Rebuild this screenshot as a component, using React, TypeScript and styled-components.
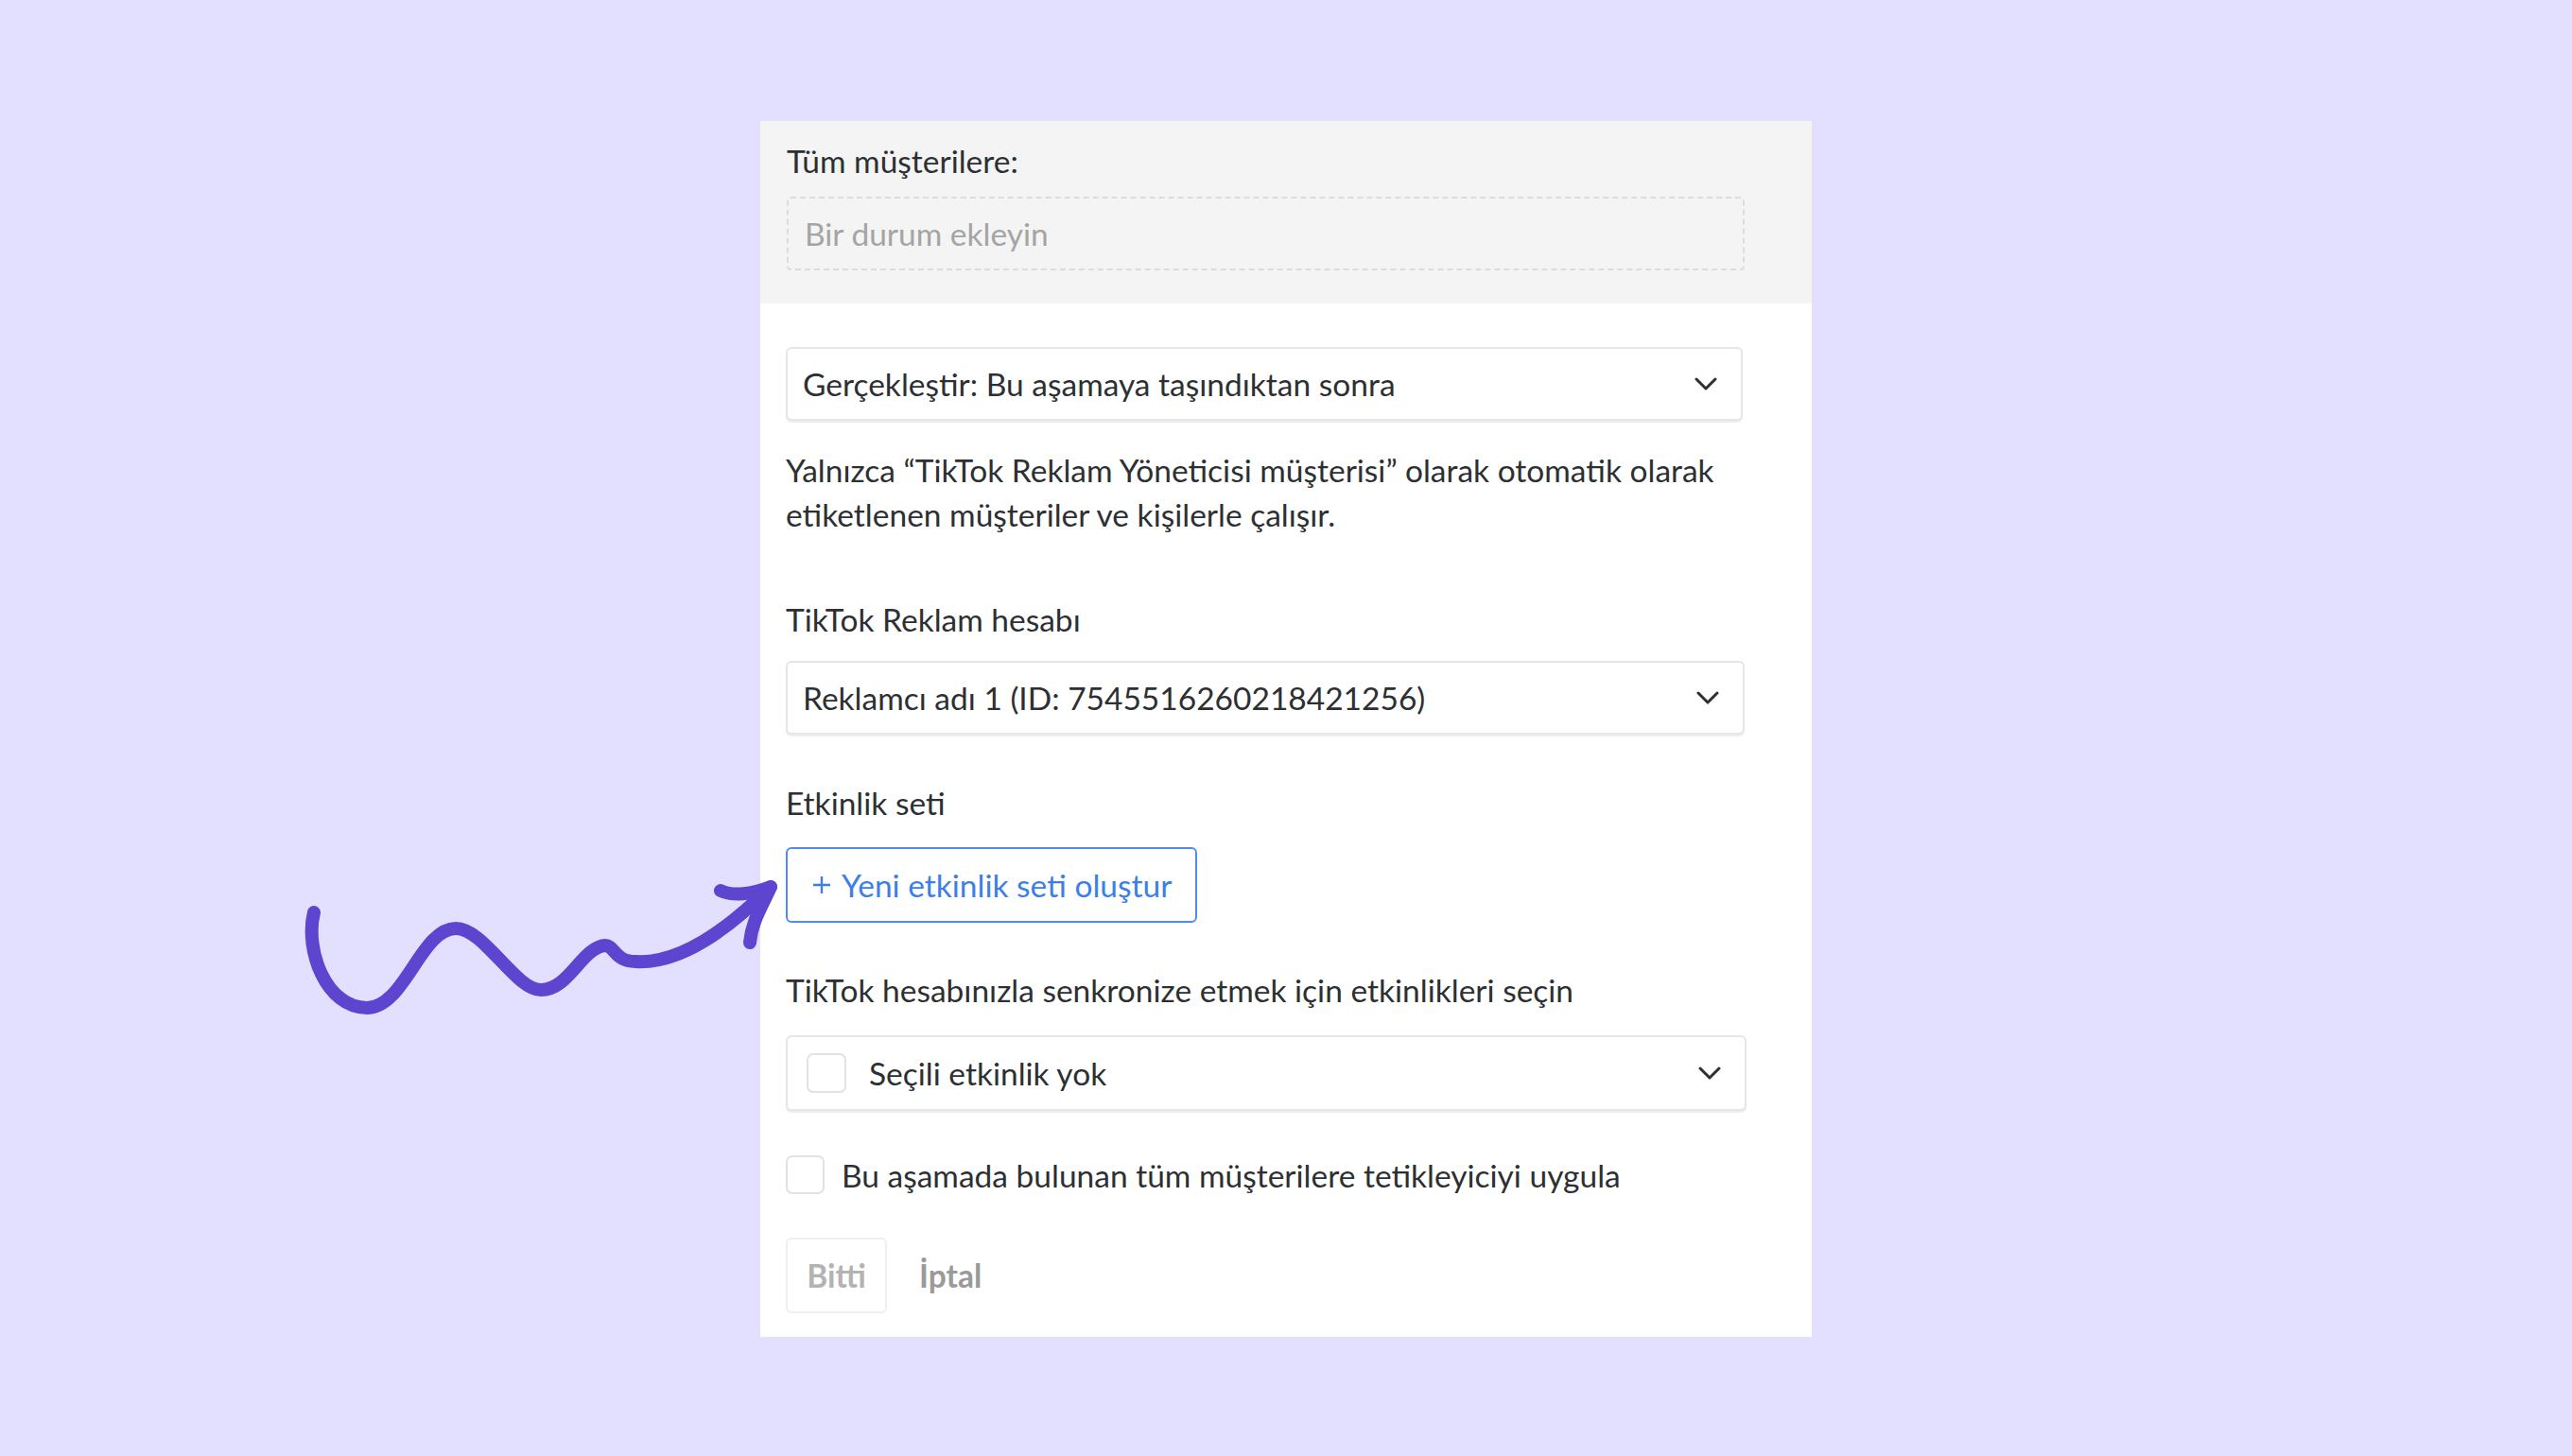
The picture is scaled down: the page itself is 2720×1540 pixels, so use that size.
import React from "react";
import styled, { createGlobalStyle } from "styled-components";

const Global = createGlobalStyle`
  html, body {
    margin: 0;
    padding: 0;
    background: #e3dffe;
  }
  body {
    font-family: "Lato", "Open Sans", sans-serif;
    color: #2d3033;
  }
`;

const FS = "33.5px";

const Page = styled.div`
  position: relative;
  width: 2720px;
  min-height: 1540px;
  box-sizing: border-box;
  padding-top: 128px;
  display: flex;
  justify-content: center;
  align-items: flex-start;
`;

const Panel = styled.div`
  width: 1112px;
  background: #ffffff;
  display: flex;
  flex-direction: column;
`;

const Header = styled.div`
  background: #f4f4f4;
  padding: 19px 71px 35px 28px;
  display: flex;
  flex-direction: column;
  gap: 14px;
`;

const Body = styled.div`
  padding: 46px 71px 25px 27px;
  display: flex;
  flex-direction: column;
`;

const Text = styled.div<{ $mt?: number }>`
  font-size: ${FS};
  line-height: 47px;
  color: #2d3033;
  margin-top: ${(p) => p.$mt ?? 0}px;
`;

const DashedBox = styled.div`
  height: 78px;
  box-sizing: border-box;
  border: 2px dashed #dcdcdc;
  border-radius: 4px;
  display: flex;
  align-items: center;
  padding-left: 17px;
  font-size: ${FS};
  color: #a4a4a4;
`;

const Select = styled.div<{ $mt?: number; $h?: number; $w?: number }>`
  height: ${(p) => p.$h ?? 78}px;
  width: ${(p) => p.$w ?? 1014}px;
  margin-top: ${(p) => p.$mt ?? 0}px;
  box-sizing: border-box;
  border: 2px solid #e6e6e6;
  border-radius: 6px;
  box-shadow: 0 2px 1px rgba(0, 0, 0, 0.07);
  background: #fff;
  display: flex;
  align-items: center;
  padding: 0 25px 0 16px;
  font-size: ${FS};
  color: #2d3033;
`;

const SelectValue = styled.span`
  flex: 1;
  display: flex;
  align-items: center;
  gap: 24px;
`;

const Box = styled.span<{ $size?: number }>`
  width: ${(p) => p.$size ?? 42}px;
  height: ${(p) => p.$size ?? 42}px;
  box-sizing: border-box;
  border: 2px solid #e2e2e2;
  border-radius: 7px;
  background: #fff;
  flex: none;
`;

const InnerBox = styled(Box)`
  margin-left: 4px;
`;

const CreateButton = styled.button`
  margin-top: 23px;
  align-self: flex-start;
  height: 80px;
  box-sizing: border-box;
  padding: 0 25px;
  background: #fff;
  border: 2px solid #4d8cf2;
  border-radius: 6px;
  font-family: inherit;
  font-size: ${FS};
  color: #3b80e8;
  display: flex;
  align-items: center;
  gap: 10px;
`;

const CheckRow = styled.label`
  margin-top: 44px;
  height: 47px;
  display: flex;
  align-items: center;
  gap: 18px;
  font-size: ${FS};
  color: #2d3033;
`;

const Actions = styled.div`
  margin-top: 43px;
  display: flex;
  align-items: center;
  gap: 34px;
`;

const DoneButton = styled.button`
  width: 107px;
  height: 80px;
  box-sizing: border-box;
  padding: 0;
  background: #fff;
  border: 2px solid #efefef;
  border-radius: 6px;
  font-family: inherit;
  font-size: ${FS};
  font-weight: 700;
  color: #b3b3b3;
`;

const CancelLink = styled.span`
  font-size: ${FS};
  font-weight: 700;
  color: #9a9a9a;
`;

const Scribble = styled.svg`
  position: absolute;
  left: 0;
  top: 0;
  pointer-events: none;
`;

const Chevron = () => (
  <svg width="24" height="15" viewBox="0 0 24 15" fill="none">
    <path d="M2 2l10 10 10-10" stroke="#2d3033" strokeWidth="3" strokeLinecap="round" strokeLinejoin="round" />
  </svg>
);

const Plus = () => (
  <svg width="22" height="22" viewBox="0 0 22 22" fill="none">
    <path d="M11 2v18M2 11h18" stroke="#3b80e8" strokeWidth="2.4" />
  </svg>
);

export default function App() {
  return (
    <>
      <Global />
      <Page>
        <Panel>
          <Header>
            <Text>Tüm müşterilere:</Text>
            <DashedBox>Bir durum ekleyin</DashedBox>
          </Header>
          <Body>
            <Select $w={1012}>
              <SelectValue>Gerçekleştir: Bu aşamaya taşındıktan sonra</SelectValue>
              <Chevron />
            </Select>
            <Text $mt={29}>
              Yalnızca “TikTok Reklam Yöneticisi müşterisi” olarak otomatik olarak
              <br />
              etiketlenen müşteriler ve kişilerle çalışır.
            </Text>
            <Text $mt={64}>TikTok Reklam hesabı</Text>
            <Select $mt={20}>
              <SelectValue>Reklamcı adı 1 (ID: 7545516260218421256)</SelectValue>
              <Chevron />
            </Select>
            <Text $mt={49}>Etkinlik seti</Text>
            <CreateButton>
              <Plus />
              Yeni etkinlik seti oluştur
            </CreateButton>
            <Text $mt={48}>TikTok hesabınızla senkronize etmek için etkinlikleri seçin</Text>
            <Select $mt={24} $h={80} $w={1016}>
              <SelectValue>
                <InnerBox />
                Seçili etkinlik yok
              </SelectValue>
              <Chevron />
            </Select>
            <CheckRow>
              <Box $size={41} />
              Bu aşamada bulunan tüm müşterilere tetikleyiciyi uygula
            </CheckRow>
            <Actions>
              <DoneButton>Bitti</DoneButton>
              <CancelLink>İptal</CancelLink>
            </Actions>
          </Body>
        </Panel>
        <Scribble width="2720" height="1540" viewBox="0 0 2720 1540">
          <g fill="none" stroke="#5e45cf" strokeWidth="14" strokeLinecap="round" strokeLinejoin="round">
            <path d="M332 965 C 322 1005 345 1066 388 1066 C 428 1066 445 982 482 982 C 512 982 545 1047 572 1047 C 602 1047 615 1002 640 1000 C 650 1000 650 1017 672 1017 C 720 1020 770 982 812 941" />
            <path d="M762 942 C 775 948 795 946 815 938" />
            <path d="M815 938 C 805 960 795 975 793 997" />
          </g>
        </Scribble>
      </Page>
    </>
  );
}
